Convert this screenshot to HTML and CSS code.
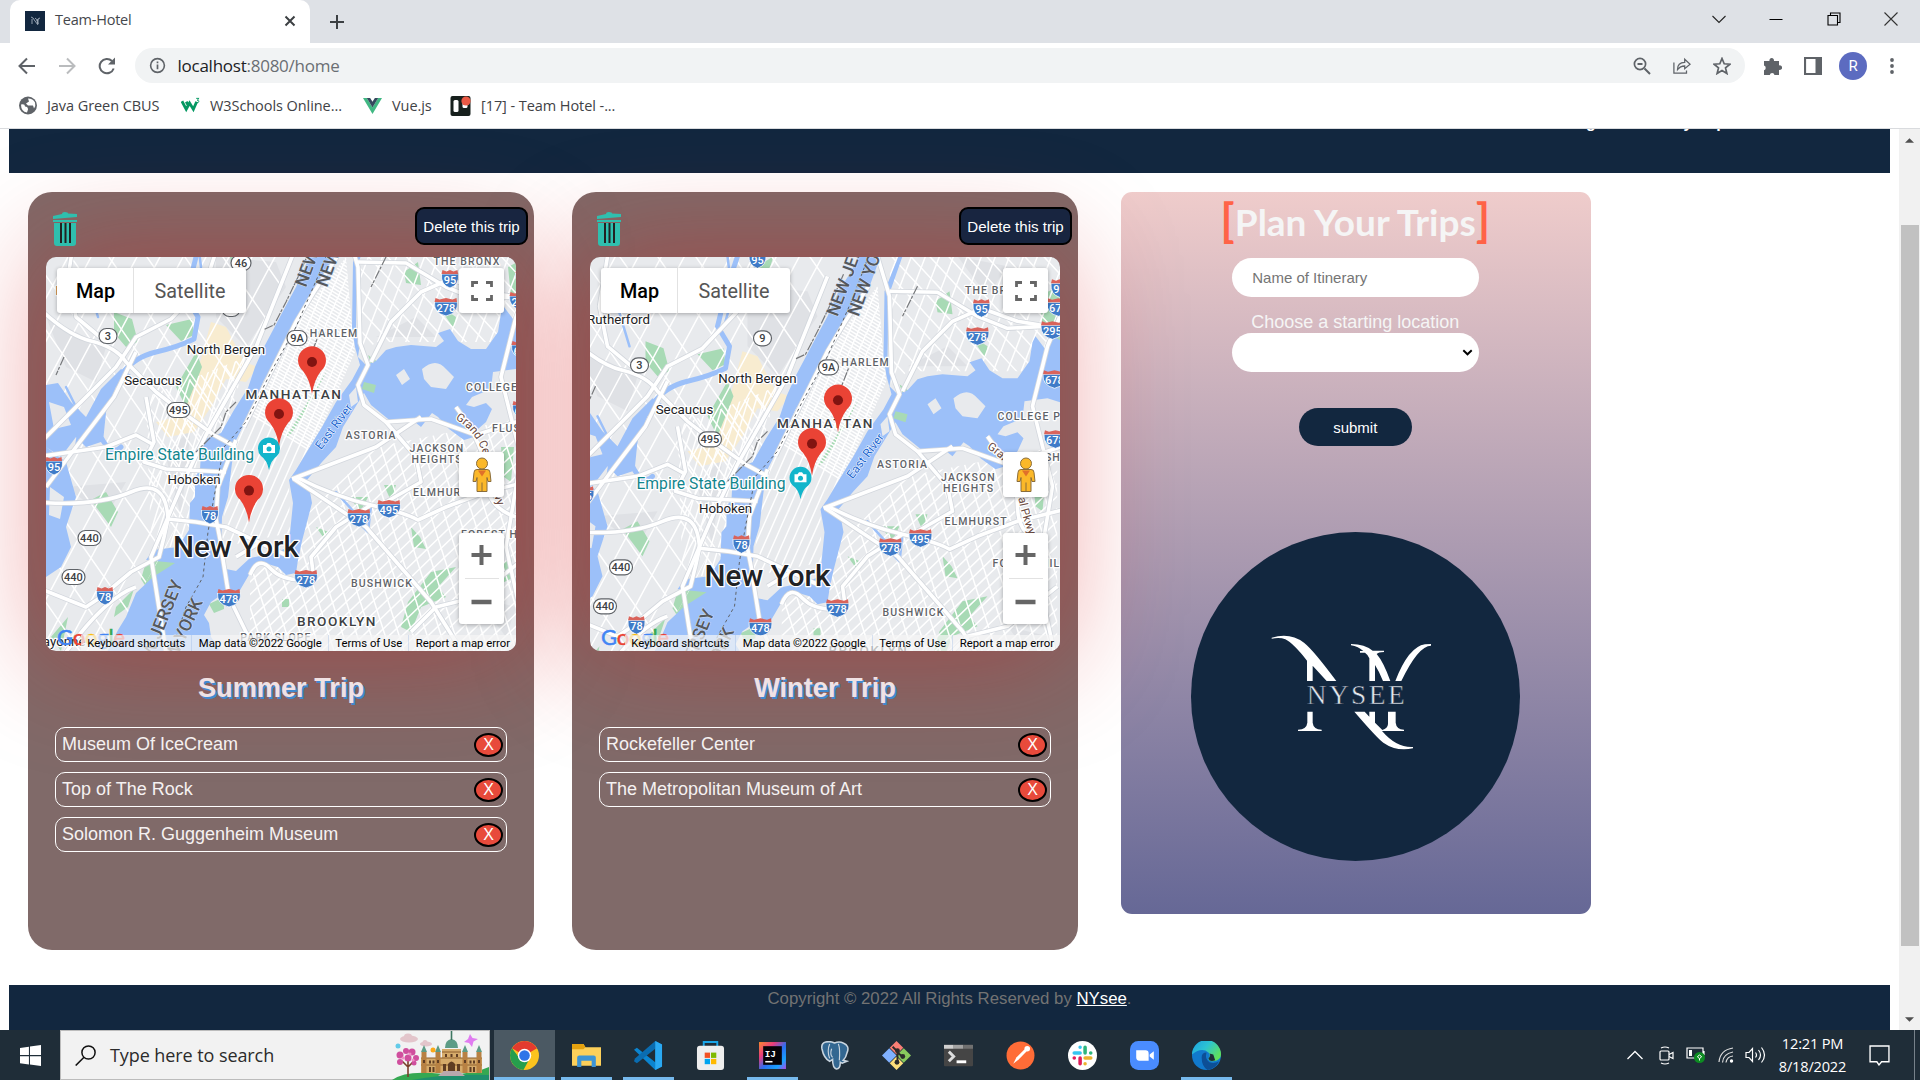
FILE: index.html
```html
<!DOCTYPE html>
<html lang="en">
<head>
<meta charset="utf-8">
<title>Team-Hotel</title>
<link rel="stylesheet" href="styles.css">
</head>
<body>
<div class="tabs">
  <div class="tab">
    <svg class="favicon" viewBox="0 0 20 20"><path fill="#12273f" d="M0 0h20v20H0z"/><path d="M6 6q2 0 4 4l3 4M7 8v5M10 7q2 0 3 6V8M12 10q1-3 3-3" fill="none" stroke="#b9c3cf" stroke-width=".8"/></svg>
    <span class="tab-title">Team-Hotel</span>
    <svg class="tab-close" viewBox="0 0 12 12"><path d="M1.500 1.500l9 9M10.500 1.500l-9 9" stroke="#3c4043" stroke-width="2"/></svg>
  </div>
  <svg class="new-tab" viewBox="0 0 16 16"><path d="M8 1v14M1 8h14" stroke="#3c4043" stroke-width="2"/></svg>
  <div class="window-buttons">
    <svg viewBox="0 0 14 14"><path d="M.5 4L7 10.500 13.500 4" fill="none" stroke="#222" stroke-width="1.100"/></svg>
    <svg viewBox="0 0 14 14"><path d="M.5 7.500h13" stroke="#000"/></svg>
    <svg viewBox="0 0 14 14"><path d="M1 3.500h9.500V13H1zM3.500 3V1H13v9.500h-2" fill="none" stroke="#000" stroke-width="1.100"/></svg>
    <svg viewBox="0 0 14 14"><path d="M.5.5l13 13M13.500.5l-13 13" stroke="#333" stroke-width="1.100"/></svg>
  </div>
</div>
<div class="toolbar">
  <svg class="nav" viewBox="0 0 18 18"><path d="M17 9H2M9 1.500L1.500 9 9 16.500" fill="none" stroke="#5f6368" stroke-width="2"/></svg>
  <svg class="nav" viewBox="0 0 18 18"><path d="M1 9h15M9 1.500L16.500 9 9 16.500" fill="none" stroke="#babcbe" stroke-width="2"/></svg>
  <svg class="nav" viewBox="0 0 18 18"><path d="M15.700 11.500A7.200 7.200 0 1 1 14 4" fill="none" stroke="#5f6368" stroke-width="2"/><path d="M17 .5V7.500h-7z" fill="#5f6368"/></svg>
  <div class="omnibox">
    <svg class="info" viewBox="0 0 18 18"><circle cx="9" cy="9" r="7.300" fill="none" stroke="#5f6368" stroke-width="1.700"/><path d="M9 8v5M9 4.700v1.800" stroke="#5f6368" stroke-width="1.800"/></svg>
    <span class="url"><b>localhost</b>:8080/home</span>
    <svg class="ob" viewBox="0 0 18 18"><path d="M11.500 11.500l5.500 5.500M4.500 7h5" stroke="#5f6368" stroke-width="2"/><circle cx="7" cy="7" r="5.600" fill="none" stroke="#5f6368" stroke-width="1.700"/></svg>
    <svg class="ob" viewBox="0 0 20 18"><path d="M1 5v12h14v-3" fill="none" stroke="#5f6368" stroke-width="1.400"/><path d="M5 13q0-8 8-8V1.500L19 7l-6 5V9q-5 0-8 4z" fill="none" stroke="#5f6368" stroke-width="1.400"/></svg>
    <svg class="ob" viewBox="0 0 18 18"><path d="M9 1.500l2.200 5.300 5.700.4-4.400 3.700 1.400 5.600L9 13.500l-4.900 3 1.400-5.600L1.100 7.200l5.700-.4z" fill="none" stroke="#5f6368" stroke-width="1.700"/></svg>
  </div>
  <svg class="ext" viewBox="0 0 18 18"><path fill="#5f6368" d="M0 4h5.500a2.300 2.300 0 1 1 4.400 0H15v4.500a2.300 2.300 0 1 1 0 4.300V18H10.500a2.400 2.400 0 0 0-4.700 0H0v-4.800a2.400 2.400 0 0 0 0-4.600z"/></svg>
  <svg class="ext" viewBox="0 0 18 18"><path d="M1 1h16v16H1z" fill="#fff" stroke="#5f6368" stroke-width="2.200"/><path fill="#5f6368" d="M11.500 1H17v16h-5.500z"/></svg>
  <span class="avatar">R</span>
  <svg class="dots" viewBox="0 0 4 18"><g fill="#5f6368"><circle cx="2" cy="3" r="1.900"/><circle cx="2" cy="9" r="1.900"/><circle cx="2" cy="15" r="1.900"/></g></svg>
</div>
<div class="bookmarks">
  <span class="bm bm1"><svg viewBox="0 0 18 18"><circle cx="9" cy="9" r="9" fill="#5f6368"/><path d="M2 8q4-1 4 2 3 0 3 3l-1 3Q2 15 2 8zM9 2l1 3-3 2 2 2h5l1 3q2-3 1-6-2-4-7-4z" fill="#fff"/></svg><i>Java Green CBUS</i></span>
  <span class="bm bm2"><svg viewBox="0 0 20 18"><path d="M1 4.500l4.500 8.500 3.500-6.500 4 6.500 3.500-8M5.500 5l3 5" fill="none" stroke="#059862" stroke-width="3"/><path d="M16 1.500h3l-2 2q3 0 1 2.500h-2" fill="none" stroke="#059862"/></svg><i>W3Schools Online...</i></span>
  <span class="bm bm3"><svg viewBox="0 0 20 18"><path fill="#41b883" d="M0 1h4l6 10 6-10h4L10 18z"/><path fill="#35495e" d="M4 1h3.500L10 5l2.500-4H16l-6 10z"/></svg><i>Vue.js</i></span>
  <span class="bm bm4"><svg viewBox="0 0 20 20"><rect width="20" height="20" rx="2" fill="#17201d"/><rect x="3" y="4" width="5" height="12" rx="1.500" fill="#fff"/><rect x="12" y="4" width="5" height="8" rx="1.500" fill="#fff"/><circle cx="15.500" cy="5" r="4.600" fill="#eb5a46"/></svg><i>[17] - Team Hotel -...</i></span>
</div>

<div class="viewport">
  <div class="page">
    <header class="site-head"><span>Login</span><span>My Trips</span></header>
    <main class="board">
      <section class="trip">
        <div class="trip-head">
          <svg class="trash" viewBox="0 0 24 34"><path fill="#2fbfae" d="M0 4l9-2q0-2 3-2t3 1.500l9 .5v3L0 7zM0 8h24v2H0zM1 11h22v20q0 3-3 3H4q-3 0-3-3z"/><path d="M8 11v20M12.500 11v20M17 11v20" stroke="#222" stroke-width="2"/></svg>
          <button class="delete">Delete this trip</button>
        </div>
        <div class="map">
          <svg class="tiles" viewBox="0 0 470 394" data-pins="266,137 233,189 203,265.600"></svg>
          <div class="map-ui">
            <div class="map-top"><div class="types"><b>Map</b><span>Satellite</span></div><div class="square"><svg viewBox="0 0 22 20"><path d="M1.500 6V1.500H7M15 1.500h5.500V6M20.500 14v4.500H15M7 18.500H1.500V14" fill="none" stroke="#666" stroke-width="2.800"/></svg></div></div>
            <div class="square peg"><svg viewBox="0 0 20 34"><path d="M5 12h10q3 0 3 3l1 9h-3l-1-4v14H5V20l-1 4H1l1-9q0-3 3-3z" fill="#fbb829" stroke="#8a6d3b"/><circle cx="10" cy="6" r="5.500" fill="#fbb829" stroke="#8a6d3b"/><path d="M6 13h8l-4 6z" fill="#e0702a"/><path d="M10 25v9" stroke="#8a6d3b"/></svg></div>
            <div class="zoomer"><svg viewBox="0 0 20 20"><path d="M10 0v20M0 10h20" stroke="#666" stroke-width="4"/></svg><hr><svg viewBox="0 0 20 20"><path d="M0 10h20" stroke="#666" stroke-width="4.500"/></svg></div>
            <div class="google"><i class="gb">G</i><i class="gr">o</i><i class="gy">o</i><i class="gb">g</i><i class="gg">l</i><i class="gr">e</i></div>
            <div class="legal"><span>Keyboard shortcuts</span><span>Map data ©2022 Google</span><span>Terms of Use</span><span>Report a map error</span></div>
          </div>
        </div>
        <h2>Summer Trip</h2>
        <ul class="stops">
          <li>Museum Of IceCream<button>X</button></li>
          <li>Top of The Rock<button>X</button></li>
          <li>Solomon R. Guggenheim Museum<button>X</button></li>
        </ul>
      </section>
      <section class="trip">
        <div class="trip-head">
          <svg class="trash" viewBox="0 0 24 34"><path fill="#2fbfae" d="M0 4l9-2q0-2 3-2t3 1.500l9 .5v3L0 7zM0 8h24v2H0zM1 11h22v20q0 3-3 3H4q-3 0-3-3z"/><path d="M8 11v20M12.500 11v20M17 11v20" stroke="#222" stroke-width="2"/></svg>
          <button class="delete">Delete this trip</button>
        </div>
        <div class="map">
          <svg class="tiles" viewBox="12.500 -29.300 470 394" data-pins="260.500,146 234.500,189.500"></svg>
          <div class="map-ui">
            <div class="map-top"><div class="types"><b>Map</b><span>Satellite</span></div><div class="square"><svg viewBox="0 0 22 20"><path d="M1.500 6V1.500H7M15 1.500h5.500V6M20.500 14v4.500H15M7 18.500H1.500V14" fill="none" stroke="#666" stroke-width="2.800"/></svg></div></div>
            <div class="square peg"><svg viewBox="0 0 20 34"><path d="M5 12h10q3 0 3 3l1 9h-3l-1-4v14H5V20l-1 4H1l1-9q0-3 3-3z" fill="#fbb829" stroke="#8a6d3b"/><circle cx="10" cy="6" r="5.500" fill="#fbb829" stroke="#8a6d3b"/><path d="M6 13h8l-4 6z" fill="#e0702a"/><path d="M10 25v9" stroke="#8a6d3b"/></svg></div>
            <div class="zoomer"><svg viewBox="0 0 20 20"><path d="M10 0v20M0 10h20" stroke="#666" stroke-width="4"/></svg><hr><svg viewBox="0 0 20 20"><path d="M0 10h20" stroke="#666" stroke-width="4.500"/></svg></div>
            <div class="google"><i class="gb">G</i><i class="gr">o</i><i class="gy">o</i><i class="gb">g</i><i class="gg">l</i><i class="gr">e</i></div>
            <div class="legal"><span>Keyboard shortcuts</span><span>Map data ©2022 Google</span><span>Terms of Use</span><span>Report a map error</span></div>
          </div>
        </div>
        <h2>Winter Trip</h2>
        <ul class="stops">
          <li>Rockefeller Center<button>X</button></li>
          <li>The Metropolitan Museum of Art<button>X</button></li>
        </ul>
      </section>
      <section class="plan">
        <h1><i>[</i><span>Plan Your Trips</span><i>]</i></h1>
        <div class="field">Name of Itinerary</div>
        <label>Choose a starting location</label>
        <div class="field select"><svg viewBox="0 0 10 7"><path d="M.8 1.200L5 5.300l4.200-4.100" fill="none" stroke="#000" stroke-width="1.900"/></svg></div>
        <button class="submit">submit</button>
        <svg class="logo" viewBox="273 96 987 987">
          <circle cx="766.500" cy="589.500" r="493.500" fill="#12273f"/>
          <g fill="#fff">
            <path d="M515 413Q570 396 612 428 640 450 709 543H680L638 497V543H621V482Q580 430 556 418 540 411 515 416z"/>
            <path d="M753 432Q795 433 818 452H852V456Q835 456 830 462 850 485 871 543H849Q838 515 825 495V543H808V475Q804 464 795 458H780V453H790Q775 440 753 436z"/>
            <path d="M993 432V437Q955 437 904 543H886Q926 440 975 433z"/>
            <path d="M622 635H638V668Q640 688 665 689V693H594V689Q620 688 622 668z"/>
            <path d="M763 635H794L808 650V635H825V668L847 690Q863 686 864 672V635H887V668Q889 688 912 689V693H846Q890 744 939 741V745Q890 756 850 728 832 715 763 635z"/>
          </g>
          <text x="620" y="613" class="logo-text" textLength="294">NYSEE</text>
        </svg>
      </section>
    </main>
    <footer class="site-foot">Copyright © 2022 All Rights Reserved by <a>NYsee</a>.</footer>
  </div>
  <div class="scroll"><svg viewBox="0 0 10 5"><path d="M0 5l5-5 5 5z" fill="#505050"/></svg><div class="thumb"></div><svg viewBox="0 0 10 5"><path d="M0 0l5 5 5-5z" fill="#505050"/></svg></div>
</div>

<div class="taskbar">
  <div class="start"><svg viewBox="0 0 20 20"><path fill="#fff" d="M0 2.800l8.500-1.200v8H0zM9.500 1.500L20 0v9.600H9.500zM0 10.600h8.500v8L0 17.400zM9.500 10.600H20V20L9.500 18.500z"/></svg></div>
  <div class="search">
    <svg class="glass" viewBox="0 0 21 21"><circle cx="13.500" cy="7.500" r="6.600" fill="none" stroke="#111" stroke-width="1.500"/><path d="M9 12.300L.7 20.500" stroke="#111" stroke-width="1.600"/></svg>
    <span>Type here to search</span>
    <svg class="castle" viewBox="0 0 97 49">
      <path d="M0 49Q12 40 40 42 75 46 97 36V49z" fill="#35a852"/><path d="M20 49q30-6 77-5v5z" fill="#1f8f6d"/>
      <g fill="#e3c5cb"><ellipse cx="17" cy="8" rx="9" ry="3.500"/><ellipse cx="16" cy="5.500" rx="4" ry="3"/><ellipse cx="34" cy="13" rx="6" ry="2.500"/><circle cx="33" cy="11.500" r="2.500"/></g>
      <path d="M16 46V28M16 36l-6-6M16 36l6-6" stroke="#7a3f2c" stroke-width="1.600" fill="none"/>
      <g fill="#d04f9e"><circle cx="8" cy="24" r="3.500"/><circle cx="14" cy="20" r="3"/><circle cx="20" cy="21" r="3.500"/><circle cx="24" cy="27" r="3"/><circle cx="8" cy="31" r="3"/><circle cx="16" cy="27" r="3.500"/><circle cx="22" cy="32" r="2.500"/></g>
      <g fill="#f08cc4"><circle cx="11" cy="27" r="1.500"/><circle cx="18" cy="23" r="1.500"/><circle cx="21" cy="29" r="1.500"/></g>
      <path d="M29 27h61v15H29zM50 18h19v10H50z" fill="#d6ab6a"/><path d="M29 27h61M29 34h61M50 21h19" stroke="#8b5f2d" stroke-width="1.200"/>
      <path d="M53 17q0-8 6.500-9 6.500 1 6.500 9z" fill="#5d9c86"/><path d="M59.500 0v9" stroke="#3f7762" stroke-width="1.600"/>
      <g fill="#5d9c86"><path d="M29 21l3-7 3 7zM43 21l3-7 3 7zM70 21l3-7 3 7zM84 21l3-7 3 7z"/></g>
      <g fill="#b88143"><path d="M29.500 21h5v21h-5zM43.500 21h5v21h-5zM70.500 21h5v21h-5zM84.500 21h5v21h-5z"/></g>
      <g fill="#5f3d23"><path d="M37 36h2v5h-2zM40.500 36h2v5h-2zM51 33h3v7h-3zM65 33h3v7h-3zM77.500 36h2v5h-2zM81 36h2v5h-2zM31 29h2v3h-2zM45 29h2v3h-2zM72 29h2v3h-2zM86 29h2v3h-2zM37 29.500h2v3h-2zM40.500 29.500h2v3h-2zM77.500 29.500h2v3h-2zM81 29.500h2v3h-2zM53 23h2v3h-2zM58.500 23h2v3h-2zM64 23h2v3h-2z"/><path d="M56 41V33q3.500-5 7 0v8z"/></g>
      <path d="M52 40h15l6 5H46z" fill="#b9a8ad"/><circle cx="6" cy="15" r="2.500" fill="#62cbe8"/><circle cx="41" cy="19" r="2.500" fill="#fba919"/><path d="M78 3l2.500 4L86 8l-4.500 2.500L80 16l-3-4-5-1 4-3z" fill="#e07cf0"/>
    </svg>
  </div>
  <div class="apps">
    <div class="app active on"><svg viewBox="0 0 28 28"><circle cx="14" cy="14" r="14" fill="#fcc31e"/><path d="M14 14L1.900 7A14 14 0 0 1 26.100 7z" fill="#e33b2e"/><path d="M1.900 7A14 14 0 0 0 13 28l6-11-5 2-6-4z" fill="#269e4d"/><circle cx="14" cy="14" r="6.500" fill="#fff"/><circle cx="14" cy="14" r="5.100" fill="#2f74e8"/></svg></div>
    <div class="app on"><svg viewBox="0 0 28 28"><path d="M0 3h11l2 3h15v18H0z" fill="#fdd05a"/><path d="M0 3h11l2 3-2 2H0z" fill="#e5a20f"/><path d="M5 25v-9q0-2 2-2h14q2 0 2 2v9h-4v-6H9v6z" fill="#3d94d5"/></svg></div>
    <div class="app on"><svg viewBox="0 0 30 30"><path d="M22 0l7 3.500v23L22 30 3 12 0 9l3-2 19 15z" fill="#0b84cf"/><path d="M22 0v8L3 23l-3-2 1-3z" fill="#0a6cb0"/><path d="M22 0l7 3.500v23L22 30z" fill="#2aa9f2"/></svg></div>
    <div class="app"><svg viewBox="0 0 30 30"><path d="M8 6V1h14v5" fill="none" stroke="#1aa5e8" stroke-width="2"/><rect x="1" y="5" width="28" height="25" rx="3" fill="#eee"/><path d="M9 12h5.500v5.500H9z" fill="#f25022"/><path d="M15.500 12H21v5.500h-5.500z" fill="#7fba00"/><path d="M9 18.500h5.500V24H9z" fill="#00a4ef"/><path d="M15.500 18.500H21V24h-5.500z" fill="#ffb900"/></svg></div>
    <div class="app on"><svg viewBox="0 0 28 28"><defs><linearGradient id="ij" x2="1" y2="1"><stop stop-color="#fe8a2e"/><stop offset=".3" stop-color="#e93c7e"/><stop offset=".55" stop-color="#2b6ef2"/><stop offset=".8" stop-color="#18a2ff"/><stop offset="1" stop-color="#b24ae8"/></linearGradient></defs><path d="M1 1h26v26H1z" fill="url(#ij)"/><path d="M5 5h18v18H5z" fill="#050308"/><text x="6.500" y="15" class="ij">IJ</text><path d="M7 20h7" stroke="#fff" stroke-width="1.500"/></svg></div>
    <div class="app"><svg viewBox="0 0 30 30"><path d="M6 1q5-1 9 1 5-2 9 0 7 3 4 10-1 5-4 8l4 1-5 2-2-1q0 7-4 7-4-1-4-10l-3 2Q4 18 2 8 1 2 6 1z" fill="#336791" stroke="#c9d5df" stroke-width="1.600"/><path d="M10 18q-3-8 0-15M20 20q1-12-1-17M13 17q-3-3-1-9" fill="none" stroke="#c9d5df" stroke-width="1.200"/></svg></div>
    <div class="app"><svg viewBox="0 0 30 30"><path d="M15 0l7 7-7 7-7-7z" fill="#f97f75"/><path d="M22.500 7.500L30 15l-7.500 7.500L15 15z" fill="#89c95d"/><path d="M7.500 7.500L15 15l-7.500 7.500L0 15z" fill="#80b1ff"/><path d="M15 16l7 7-7 7-7-7z" fill="#fddf7b"/><path d="M11 6l5 5v11M16 12l5 4" stroke="#2b2b2b" stroke-width="2" fill="none"/><g fill="#2b2b2b"><circle cx="16" cy="10" r="2.500"/><circle cx="21.500" cy="16" r="2.500"/><circle cx="15.500" cy="22" r="2.500"/></g></svg></div>
    <div class="app"><svg viewBox="0 0 30 30"><rect y="4" width="30" height="22" rx="1" fill="#454545"/><path d="M0 4h10v4H0z" fill="#cfcfcf"/><path d="M10 4h10v4H10z" fill="#a2a2a2"/><path d="M20 4h10v4H20z" fill="#707070"/><path d="M5 11l5 5-5 5" fill="none" stroke="#ddd" stroke-width="3"/><path d="M13 21.500h10" stroke="#fff" stroke-width="3"/></svg></div>
    <div class="app"><svg viewBox="0 0 28 28"><circle cx="14" cy="14" r="13.500" fill="#ff6c37"/><path d="M7 22l3-6 8-8 2 2-8 8z" fill="#fff"/><circle cx="20.500" cy="7.500" r="2.700" fill="#fff"/></svg></div>
    <div class="app"><svg viewBox="0 0 28 28"><circle cx="14" cy="14" r="14" fill="#fff"/><g stroke-width="3.400" stroke-linecap="round"><path d="M11.700 6v.1M11.700 11.500H6" stroke="#36c5f0"/><path d="M16.500 6v5.500M22 11.500h-.1" stroke="#2eb67d"/><path d="M11.700 16.500V22M6 16.500h.1" stroke="#e01e5a"/><path d="M16.500 16.500H22M16.500 22v-.1" stroke="#ecb22e"/></g></svg></div>
    <div class="app"><svg viewBox="0 0 28 28"><rect width="28" height="28" rx="8" fill="#4a8cff"/><path d="M6 9h9q3 0 3 3v7H9q-3 0-3-3zM19 13l4-3v8l-4-3z" fill="#fff"/></svg></div>
    <div class="app on"><svg viewBox="0 0 30 30"><defs><linearGradient id="ea" x2="1" y2=".6"><stop stop-color="#1b9de2"/><stop offset=".5" stop-color="#2cc3d2"/><stop offset="1" stop-color="#5fe05c"/></linearGradient></defs><circle cx="15" cy="15" r="15" fill="#1179cd"/><path d="M0 14A15 15 0 0 1 30 14q0 6-8 7-5 0-5-3 3-3 0-6Q10 6 0 14z" fill="url(#ea)"/><path d="M10 17q0-5 5-5-2 7 3 10 5 2 10-1-4 8-12 9-6-4-6-13z" fill="#0d4f96"/><path d="M17 18q3-3 1-5l4 1 2 6q-6 2-7-2z" fill="#1f2d38"/></svg></div>
  </div>
  <div class="tray">
    <svg class="t1" viewBox="0 0 16 10"><path d="M.5 9L8 1.500 15.500 9" fill="none" stroke="#fff" stroke-width="1.300"/></svg>
    <svg class="t2" viewBox="0 0 15 19"><g fill="none" stroke="#fff" stroke-width="1.200"><rect x="1" y="5" width="9" height="9" rx="1"/><path d="M10 8.500l4-2v6l-4-2M2 2q4-2 8 0M2 17q4 2 8 0"/></g></svg>
    <svg class="t3" viewBox="0 0 20 16"><path d="M1 1h16v10H1zM18 4v4" fill="none" stroke="#fff" stroke-width="1.200"/><path d="M3 3h3v6H3z" fill="#fff"/><circle cx="13.500" cy="10.500" r="5.500" fill="#0d8b22"/><path d="M13.500 13.500v-2M11.500 10q2-4 4 0-2 3-4 0z" fill="none" stroke="#fff"/></svg>
    <svg class="t4" viewBox="0 0 16 16"><g fill="none" stroke="#ddd" stroke-width="1.200"><path d="M1 15Q2 3 15 1M4.500 15.500Q5 7 15 5M8 15.500q1-6 7-6.500"/></g><circle cx="13.500" cy="14" r="1.700" fill="#fff"/></svg>
    <svg class="t5" viewBox="0 0 21 18"><g fill="none" stroke="#fff" stroke-width="1.200"><path d="M1 6.500h3L7.500 2.500v13L4 11.500H1zM10.500 6.500q2 2.500 0 5M13.500 4q4 5 0 10M16.500 1.500q6 7.500 0 15"/></g></svg>
    <div class="clock"><span>12:21 PM</span><span>8/18/2022</span></div>
    <svg class="t6" viewBox="0 0 20 20"><path d="M1 1h18v15h-7l-2.500 3L7.500 16H1z" fill="none" stroke="#fff" stroke-width="1.300"/></svg>
    <span class="peek"></span>
  </div>
</div>
<script src="map.js"></script>
</body>
</html>
```
FILE: styles.css
```css
* { box-sizing: border-box; }
body { margin: 0; width: 1920px; height: 1080px; overflow: hidden; display: flex; flex-direction: column; font-family: "Liberation Sans", Arial, sans-serif; background: #fff; }
svg { display: block; flex: none; }
i { font-style: normal; }
button { font-family: inherit; margin: 0; }

/* browser frame */
.tabs, .toolbar, .bookmarks, .taskbar { font-family: "Open Sans", "Noto Sans", sans-serif; flex: none; display: flex; align-items: center; }
.tabs { height: 43px; background: #dee1e6; padding-left: 10px; }
.tab { width: 300px; height: 43px; background: #fff; border-radius: 10px 10px 0 0; display: flex; align-items: center; padding: 0 14px 1px 15px; }
.favicon { width: 20px; height: 20px; }
.tab-title { flex: 1; margin-left: 10px; font-size: 14.500px; letter-spacing: -.22px; line-height: 18px; padding-bottom: 2px; color: #45484c; }
.tab-close { width: 12px; height: 12px; }
.new-tab { width: 16px; height: 16px; margin-left: 19px; }
.window-buttons { margin-left: auto; display: flex; gap: 43.500px; padding: 0 22px 6px 0; }
.window-buttons svg { width: 14px; height: 14px; }
.toolbar { height: 45px; padding: 0 22px 0 18px; }
.nav { width: 18px; height: 18px; margin-right: 22px; }
.omnibox { width: 1610px; height: 35px; margin-left: -3px; background: #f1f3f4; border-radius: 18px; display: flex; align-items: center; padding: 0 14px; }
.info { width: 17px; height: 17px; }
.url { flex: 1; margin-left: 11.500px; font-size: 17px; letter-spacing: -.25px; color: #6a6e73; }
.url b { font-weight: 400; color: #202124; }
.ob { width: 18px; height: 18px; margin-left: 22px; }
.ext { width: 18px; height: 18px; margin-left: 19px; margin-right: 3px; }
.avatar { width: 28px; height: 28px; margin-left: 14px; border-radius: 50%; background: #5c6bc0; color: #fff; font: 15px/28px Roboto, sans-serif; text-align: center; }
.dots { width: 4px; height: 18px; margin-left: 23px; }
.bookmarks { height: 41px; border-bottom: 1px solid #d9dbde; padding: 0 0 5px 19px; color: #3f4246; font-size: 14.500px; letter-spacing: -.07px; }
.bm { display: flex; align-items: center; gap: 10px; white-space: nowrap; }
.bm svg { width: 19px; height: 19px; }
.bm1 { width: 162px; } .bm2 { width: 182px; } .bm3 { width: 87px; }
.bm1 svg { width: 18px; } .bm4 svg { width: 21px; height: 20px; }

/* web page */
.viewport { height: 901px; display: flex; overflow: hidden; }
.page { flex: 1; overflow: hidden; }
.site-head { height: 44px; margin: 0 9px; background: #12273f; color: #fff; font-weight: 700; font-size: 16px; line-height: 16px; overflow: hidden; display: flex; justify-content: flex-end; align-items: flex-start; gap: 60px; padding-right: 155px; }
.site-head span { margin-top: -14px; }
.board { height: 812px; padding: 19px 0 0 28px; display: flex; align-items: flex-start; }
.trip { width: 506px; height: 758px; margin-right: 38px; border-radius: 24px; background: #806a69; padding: 0 18px; }
.trip + .plan { margin-left: 5px; }
.trip-head, .trip h2, .stops { position: relative; z-index: 1; }
.trip-head { height: 65px; display: flex; align-items: flex-start; justify-content: space-between; padding: 15px 0 0 7px; margin-right: -12px; }
.trash { width: 24px; height: 34px; margin-top: 5px; }
.delete { width: 113px; height: 38px; padding: 0; border: 2px solid #000; border-radius: 9px; background: #182540; color: #fff; font-size: 15.100px; white-space: nowrap; }
.map { width: 470px; height: 394px; border-radius: 10px; position: relative; box-shadow: 0 0 115px 4px rgba(213, 19, 19, .38); display: grid; }
.tiles, .map-ui { grid-area: 1 / 1; width: 470px; height: 394px; border-radius: 10px; overflow: hidden; position: relative; z-index: 1; }
.map-ui { padding: 11px 12px 0 11px; display: flex; flex-direction: column; align-items: flex-end; font-family: Roboto, sans-serif; }
.map-top { width: 100%; display: flex; justify-content: space-between; }
.types { height: 45px; display: flex; background: #fff; border-radius: 3px; box-shadow: 0 1px 4px rgba(0,0,0,.3); font-size: 19.800px; line-height: 47px; color: #565656; }
.types b { width: 77px; padding-left: 1px; text-align: center; font-weight: 500; color: #000; border-right: 1px solid #e2e2e2; }
.types span { width: 112px; text-align: center; }
.square { width: 45px; height: 45px; background: #fff; border-radius: 3px; box-shadow: 0 1px 4px rgba(0,0,0,.3); display: flex; align-items: center; justify-content: center; }
.square svg { width: 22px; height: 20px; }
.peg { margin-top: 139px; }
.peg svg { width: 20px; height: 35px; }
.zoomer { width: 45px; height: 91px; margin-top: 36px; background: #fff; border-radius: 3px; box-shadow: 0 1px 4px rgba(0,0,0,.3); display: flex; flex-direction: column; align-items: center; justify-content: space-between; padding: 12px 0 12px; }
.zoomer svg { width: 21px; height: 20px; }
.zoomer hr { width: 34px; height: 1px; margin: 0; border: 0; background: #e2e2e2; }
.google { position: absolute; left: 11px; bottom: 2px; font: 22px/24px Lato, sans-serif; letter-spacing: -.2px; -webkit-text-stroke: .5px currentColor; }
.gb { color: #4285f4; } .gr { color: #ea4335; } .gy { color: #fbbc05; } .gg { color: #34a853; }
.legal { position: absolute; right: 0; bottom: 0; height: 16px; display: flex; background: rgba(245,245,245,.72); font-size: 11.300px; line-height: 17px; color: #000; white-space: nowrap; }
.legal span { padding: 0 6px 0 6.500px; }
.legal span + span { border-left: 1px solid rgba(120,160,220,.25); }
.trip h2 { margin: 19px 0 0; text-align: center; font-size: 27.200px; line-height: 36px; color: #f0e2e4; text-shadow: 2px 2px #4289cf; }
.stops { list-style: none; margin: 21px 9px 0; padding: 0; display: flex; flex-direction: column; gap: 10px; }
.stops li { height: 35px; display: flex; align-items: center; justify-content: space-between; border: 1px solid #fff; border-radius: 10px; padding: 0 3px 0 6px; color: #f5f1f1; font-size: 18px; }
.stops button { width: 29px; height: 24px; margin-top: 1px; border: 2px solid #000; border-radius: 50%; background: #e84a3b; color: #fff; font-size: 16px; line-height: 18px; padding: 0; }
.plan { width: 470px; height: 722px; border-radius: 11px; background: linear-gradient(#efcccb, #666896); display: flex; flex-direction: column; align-items: center; padding-right: 1.500px; }
.plan h1 { margin: 2px 0 0; height: 64px; display: flex; align-items: center; font: 700 37px/54px Lato, sans-serif; color: #f5f5f5; white-space: nowrap; }
.plan h1 i { color: tomato; font-size: 46px; line-height: 46px; font-weight: 700; margin-top: -12px; }
.plan h1 span { margin-top: -9px; }
.field { width: 247px; height: 39px; border-radius: 20px; background: #fff; color: #757575; font-size: 15px; line-height: 39px; padding: 0 20.500px; }
.select { display: flex; align-items: center; justify-content: flex-end; padding-right: 6px; }
.select svg { width: 11px; height: 7px; }
.plan label { margin-top: 15px; font-size: 18px; line-height: 21px; color: #f5f5f5; }
.submit { width: 113px; height: 38px; margin-top: 36px; border: 0; border-radius: 19px; background: #12273f; color: #fff; font-size: 15px; flex: none; }
.logo { width: 329px; height: 329px; margin-top: 86px; }
.logo-text { font: 82px "Liberation Serif", serif; fill: #e3e8ed; stroke: #12273f; stroke-width: 1.500px; }
.site-foot { height: 45px; margin: 0 9px; background: #12273f; color: #737373; text-align: center; font-size: 16.800px; line-height: 27px; }
.site-foot a { color: #fff; text-decoration: underline; }
.scroll { width: 21px; background: #f1f1f1; display: flex; flex-direction: column; align-items: center; padding: 9px 0 8px; }
.scroll svg { width: 9px; height: 5px; }
.thumb { width: 18px; height: 721px; margin: 82px 0 auto; background: #c1c1c1; }

/* taskbar */
.taskbar { height: 50px; background: #1f2d38; align-items: stretch; color: #fff; }
.start { width: 60px; display: flex; align-items: center; justify-content: center; }
.start svg { width: 21px; height: 21px; }
.search { width: 430px; background: #f2f2f2; border: 1px solid #bcbcbc; display: flex; align-items: center; color: #2b2b2b; font-size: 18px; letter-spacing: -.08px; }
.glass { width: 21px; height: 21px; margin-left: 14px; }
.search span { flex: 1; margin-left: 14px; }
.castle { width: 97px; height: 49px; }
.apps { display: flex; margin-left: 4px; gap: 1px; }
.app { width: 61px; display: flex; align-items: center; justify-content: center; }
.app.on { background: linear-gradient(#76b9ed, #76b9ed) center bottom / 51px 3px no-repeat; }
.app.active { background: linear-gradient(#76b9ed, #76b9ed) center bottom / 61px 3px no-repeat #4b5963; }
.app svg { width: 29px; height: 29px; }
.ij { font: 700 9px "Liberation Mono", monospace; fill: #fff; }
.tray { margin-left: auto; display: flex; align-items: center; }
.t1 { width: 16px; height: 10px; margin-right: 16px; }
.t2 { width: 15px; height: 19px; margin-right: 12px; }
.t3 { width: 20px; height: 16px; margin-right: 12px; }
.t4 { width: 16px; height: 16px; margin-right: 11px; }
.t5 { width: 21px; height: 18px; }
.clock { width: 93px; display: flex; flex-direction: column; align-items: center; font-size: 14.600px; line-height: 23px; letter-spacing: -.2px; }
.t6 { width: 21px; height: 21px; margin: 0 24px 0 10px; }
.peek { width: 6px; height: 50px; border-left: 1px solid #76818a; }

/* map drawing */
.tiles { background: #e8eaed; }
.water { fill: #9cc0f9; }
.creek { fill: none; stroke: #9cc0f9; stroke-linecap: round; stroke-linejoin: round; }
.park { fill: #a8dab5; }
.sand { fill: #f8ecd0; }
.hill { fill: #dfe1e5; }
.land { fill: #e8eaed; }
.case { fill: none; stroke: #d3d7dd; stroke-width: 5.200; stroke-linejoin: round; }
.road { fill: none; stroke: #fff; stroke-width: 3.600; stroke-linejoin: round; }
.minor { fill: none; stroke: #fff; stroke-width: 1.500; }
.cliff { fill: none; stroke: #77797c; stroke-width: 1.200; stroke-dasharray: 9 2 3 1; }
.border { fill: none; stroke: #5f6368; stroke-width: 1; stroke-dasharray: 3 3; }
.label { font-family: Roboto, sans-serif; text-anchor: middle; paint-order: stroke; stroke: #fff; stroke-width: 2.500px; stroke-linejoin: round; fill: #3c4043; }
.label.start-at { text-anchor: start; }
.label.end-at { text-anchor: end; }
.town { font-size: 13.300px; fill: #202124; }
.area { font-size: 10.500px; font-weight: 500; letter-spacing: 1.100px; fill: #5f6368; }
.boro { font-size: 13.600px; font-weight: 500; letter-spacing: 1.500px; }
.city { font-size: 29.600px; font-weight: 500; fill: #202124; }
.state { font-size: 17.500px; font-weight: 500; fill: #55585c; stroke: #cfdff8; stroke-width: 1px; }
.poi { font-size: 15.700px; fill: #12858d; }
.river { font-size: 12px; fill: #1a66d0; stroke-width: 1px; }
.pkwy { font-size: 11.500px; fill: #6b4a42; }
.num { font: 500 11px Roboto, sans-serif; text-anchor: middle; fill: #fff; }
.num.dark { fill: #3c4043; }
```
FILE: map.js
```js
// Draws the New York base map; each .tiles element shows it through its own viewBox.
const interstates = [[404,22,'95'],[400,50,'278'],[8,209,'95'],[164,258,'78'],[313,261,'278'],[343,252,'495'],[260,322,'278'],[183,341,'478'],[59,339,'78'],[482,2,'95'],[481,21,'678'],[475,44,'295'],[477,93,'678'],[478,153,'678'],[180,-27,'95']];
const pills = [[195,6,'46'],[62,79,'3'],[251,81,'9A'],[132.5,153,'495'],[43.5,281,'440'],[27.5,320,'440'],[185,52,'9']];
const labels = [
  [421,8,'THE BRONX','area'],[288,80,'HARLEM','area'],[180,97,'North Bergen','town'],[107,128,'Secaucus','town'],
  [248,142,'MANHATTAN','boro'],[325,182,'ASTORIA','area'],[420,134,'COLLEGE POINT','area start-at'],[446,175,'FLUSHING','area start-at'],
  [391,195,'JACKSON','area'],[391,206,'HEIGHTS','area'],[133.5,203,'Empire State Building','poi'],[148,227,'Hoboken','town'],
  [367,239,'ELMHURST','area start-at'],[415,281,'FOREST HILLS','area start-at'],[190,300,'New York','city'],[336,330,'BUSHWICK','area'],
  [291,369,'BROOKLYN','boro'],[230,384,'PARK SLOPE','area'],[41,38,'Rutherford','town'],[14,389,'Bayonne','town']
];
const turned = [
  [260,31,-70,'NEW JERSEY','state start-at'],[281,31,-70,'NEW YORK','state start-at'],
  [137,326,-68,'NEW JERSEY','state end-at'],[157,345,-65,'NEW YORK','state end-at'],[291,172,-53,'East River','river']
];
const hudson = 'M281-30L272-12 262 3 250 30 236 56 227 73 218 90 209 110 202 131 188 153 175 176 157 183 155 195 154 213 149 220 149 240 144 246 143 273 132 290 107 293 100 303 129 306 107 320 90 336 80 360 72 373 61 395H175L165 380 163 366 158 358 165 345 175 338 190 340 204 316 215 305 232 310 240 318 250 316 252 303 256 284 266 246 264 235 261 223 276 205 290 190 297 170 318 136 325 148 347 166 365 162 375 170 386 156 392 160 403 172 418 183 428 180 432 172 440 165 446 152 440 146 428 150 420 148 426 140 445 132 447 115 470 112 495 120V60L475 50 470 66 458 50 455 56 452 75 440 92 425 92 412 84 404 72 392 76 398 84 390 90 365 88 350 90 340 93 330 104 320 108 312 100 314 86 310 70 311 10 325-30H321L307 5 306 70 309 90 314 108 306 123 290 145 276 170 262 193 250 213 243 223 247 246 244 276 238 292 228 296 204 301 190 314 180 312 175 295 176 260 182 240 186 206 190 183 204 156 218 123 236 96 250 63 268 33 291 3 303-30z';
const roads = ['M-10 48Q20 78 45 84T80 105L110 135 132 152 168 178 190 190','M-10 190L40 140 70 110 90 80 125 62 160 25 178-30','M-10 245Q50 250 85 235T122 262L150 265 180 270 240 298','M-10 330L40 350 55 340 85 315 113 300 118 280 122 262','M20 395Q60 340 90 330M-10 200L60 190 90 178 108 188','M120 395L105 300 135 230 160 178 210 90 250-10','M100 140L108 185 98 205 120 212 180 215','M300-30L312 10 314 86 322 108 312 128 318 148 340 165 385 162 430 178 500 155','M250 220Q290 240 325 248T372 263L400 250 440 235 500 220','M175 290L183 340 200 375 215 395','M204 318Q212 298 225 312T268 322L265 300 290 270 325 248','M325 105L345 65 375 35 404 22 440 35 500 45','M312 5L360 6 400 30 430 42 470 40','M190 183L172 230 170 262 176 292','M291 0L268 35 250 65 225 115 198 170','M248 222L320 270 385 345 410 385','M340 165L370 200 375 225 340 245','M410 150Q440 190 440 220T470 260','M365 375L390 350 430 340 480 300','M190 300L215 285M246 222L330 190 375 160','M495 0L470 60 455 120 475 200 460 290 480 380','M60 85L30 60 22 20 30-30','M90 95L68 140 30 190 0 230'];
function lines(x0, x1, y0, y1, step, slant) {
  let d = '';
  for (let x = x0; x < x1; x += step) d += `M${x} ${y0}L${x + slant} ${y1}`;
  return d;
}
const districts = [
  ['M175 290L180 240 190 183 250 63 300 0 306 70 309 95 276 170 243 223 244 276z', lines(-100,400,-30,400,9,-190), lines(-100,500,-30,400,6,700)],
  ['M204 318L268 250 330 190 480 160V395H204z', lines(0,600,150,400,14,80), lines(100,800,150,400,13,-260)],
  ['M312-30H495V85H330L314 100z', lines(250,600,-30,100,14,-50), lines(200,600,-30,100,19,120)],
  ['M0-30H260L150 230 120 290 60 395H0z', lines(-100,500,-30,400,23,-230), lines(-300,300,-30,400,38,300)],
  ['M100 140L200 100 150 290 105 290z', lines(50,300,90,300,8,-65), lines(0,300,90,300,15,150)]
];
const parks = 'M68 55L86 62 92 85 80 90 68 76zM120 68L146 62 148 78 135 84zM272 128L282 112 262 150 246 176 240 180zM100 305L128 300 134 312 100 330 95 322zM70 350L88 332 82 350 68 360zM45 243L60 235 72 255 65 270zM358 15L372 5 375 28 360 26zM392 48L410 60 408 72zM322 98L336 108 330 122zM302 240L322 240 315 254zM338 228L350 228 345 244zM365 270L374 280 380 292 368 290zM385 315L410 310 392 330 400 340 375 350 365 375 355 370 362 345zM462 10L490-5V50L475 60 465 40zM180-20L196-30 185 5zM130 130L150 95 156 110 140 150zM270 270L285 276 280 284zM163 347L178 340 178 352 168 356zM455 190L468 190 465 225 458 220zM5 380L22 360 15 394zM236 342h7v8h-7zM440 320L465 300 468 320 445 332z';
function svgMap(pins, id) {
  let s = '<path class="hill" d="M0 60L60 90 50 125 20 110zM170 0L230 5 240 30 200 90 170 60zM20 230L80 225 60 260zM330 80L370 60 390 80zM120 200L145 170 135 260zM430 340L470 350 460 380zM380-30L430-20 410 10z"/>';
  s += '<path class="sand" d="M165 65L180 70 198 105 212 110 200 125 180 122 165 150 148 175 122 180 110 165 130 160 150 120z"/>';
  s += `<path class="park" d="${parks}"/>`;
  districts.forEach((d, i) => {
    s += `<clipPath id="${id}d${i}"><path d="${d[0]}"/></clipPath><g clip-path="url(#${id}d${i})"><path class="minor" d="${d[1]}"/><path class="minor" d="${d[2]}" stroke-width="1"/></g>`;
  });
  s += `<path class="water" d="${hudson}"/>`;
  s += '<path class="land" d="M376 112Q390 100 400 112L408 120 400 132 385 130 378 122zM350 118l8-6 6 10-8 6zM303 138L310 130 312 145 305 150z"/><path class="park" d="M318 125l12 3-2 8-12-4z"/>';
  s += '<path class="water" d="M0 128L12 126 25 145 40 160 55 132 75 112 85 118 70 130 60 155 55 185 40 190 30 180 15 200 0 190zM0 190L20 205 30 240 20 270 25 290 15 310 0 320z"/><path class="land" d="M3 145L18 150 25 168 8 172zM4 230L18 240 14 262 3 258z"/>';
  s += '<path class="creek" stroke-width="5" d="M75 118Q88 100 110 95T148 82L152 60 140 40 150 0 160-30M58 150L55 180Q65 200 75 190"/><path class="creek" stroke-width="2.500" d="M30 190L35 160 20 130M150-30L155 10 148 35M325 248L322 275 312 265M290 235L308 255M40 20L52 60"/>';
  for (const r of roads) s += `<path class="case" d="${r}"/>`;
  for (const r of roads) s += `<path class="road" d="${r}"/>`;
  s += '<path class="cliff" d="M266-12L252 20 240 45 228 68 217 73M190 145L180 155 175 170 160 185 150 195M18 100L10 118M340 0L325 30M275 72L262 105"/>';
  s += '<path class="border" d="M291-30L276 10 250 70 225 115 200 165 178 190 168 240 162 275 157 320 140 350 125 395"/>';
  s += `<path id="${id}gc" fill="none" d="M409 162Q434 176 440 208T458 262"/><text class="label pkwy start-at"><textPath href="#${id}gc">Grand Central Pkwy</textPath></text>`;
  for (const [x, y, a, t, c] of turned) s += `<text class="label ${c}" transform="translate(${x} ${y}) rotate(${a})">${t}</text>`;
  for (const [x, y, t] of pills) {
    const w = t.length > 2 ? 23 : t.length > 1 ? 20 : 18;
    s += `<rect x="${x - w / 2}" y="${y - 7.5}" width="${w}" height="15" rx="7.500" fill="#fff" stroke="#5f6368" stroke-width="1.200"/><text class="num dark" x="${x}" y="${y + 3.700}">${t}</text>`;
  }
  for (const [x, y, t] of interstates) {
    const w = t.length > 2 ? 11.5 : 8.5;
    s += `<path d="M${x - w} ${y - 5}Q${x - w - 1} ${y + 6} ${x} ${y + 9}Q${x + w + 1} ${y + 6} ${x + w} ${y - 5}z" fill="#3f7bc8" stroke="#fff" stroke-width=".8"/><path d="M${x - w + 1} ${y - 9}l4 1.500 ${w - 5}-1.500 ${w - 5} 1.500 4-1.500.5 4H${x - w}z" fill="#d9635b"/><text class="num" x="${x}" y="${y + 5}">${t}</text>`;
  }
  for (const [x, y, t, c] of labels) s += `<text class="label ${c}" x="${x}" y="${y}">${t}</text>`;
  s += '<path d="M223 213Q221 203 215 199A11 11 0 1 1 231 199Q225 203 223 213z" fill="#12b5cb"/><path d="M217 188h3l1.500-2h3l1.500 2h3v8h-12z" fill="#fff"/><circle cx="223" cy="192" r="2.500" fill="#12b5cb"/>';
  for (const p of pins) {
    const [x, y] = p.split(',').map(Number);
    s += `<path d="M${x} ${y}Q${x - 2} ${y - 14} ${x - 9} ${y - 23}A14 14 0 1 1 ${x + 9} ${y - 23}Q${x + 2} ${y - 14} ${x} ${y}z" fill="#ea4335"/><circle cx="${x}" cy="${y - 32}" r="5" fill="#811411"/>`;
  }
  return s;
}
document.querySelectorAll('.tiles').forEach((el, i) => {
  el.innerHTML = svgMap(el.dataset.pins.split(' '), 'm' + i);
});
```
